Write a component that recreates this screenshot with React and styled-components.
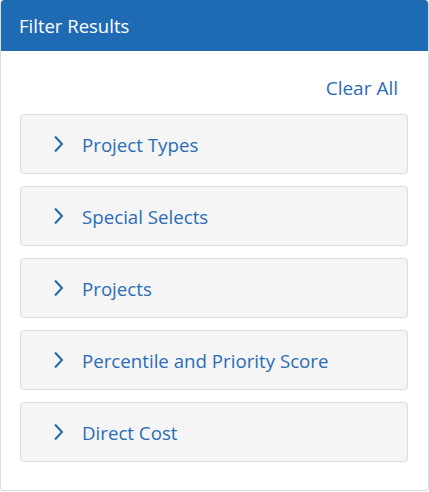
import React from 'react'
import styled, { createGlobalStyle } from 'styled-components'

const GlobalStyle = createGlobalStyle`
  body {
    margin: 0;
    background: #fff;
    font-family: 'Open Sans', 'Noto Sans', sans-serif;
  }
`

const sections = [
  'Project Types',
  'Special Selects',
  'Projects',
  'Percentile and Priority Score',
  'Direct Cost',
]

const App = () => {
  return (
    <>
      <GlobalStyle />
      <Panel>
        <Header>Filter Results</Header>
        <Body>
          <ClearRow>
            <ClearLink href='#'>Clear All</ClearLink>
          </ClearRow>
          <List>
            {sections.map((name) => (
              <Item key={name}>
                <Chevron viewBox='0 0 11 18' aria-hidden='true'>
                  <path d='M2 1.5 L9 9 L2 16.5' />
                </Chevron>
                <ItemLabel>{name}</ItemLabel>
              </Item>
            ))}
          </List>
        </Body>
      </Panel>
    </>
  )
}

const Panel = styled.section`
  width: 429px;
  height: 491px;
  box-sizing: border-box;
  border: 1px solid #dcdcdc;
  border-top: none;
  border-radius: 4px;
  overflow: hidden;
  background: #fff;
`
const Header = styled.div`
  height: 51px;
  background: #1f6bb3;
  color: #fff;
  font-size: 18.5px;
  display: flex;
  align-items: center;
  padding: 0 19px;
  margin: 0 -1px;
  border-radius: 4px 4px 0 0;
`
const Body = styled.div`
  padding: 23px 20px 0 19px;
`
const ClearRow = styled.div`
  display: flex;
  justify-content: flex-end;
  padding-right: 10px;
  height: 40px;
`
const ClearLink = styled.a`
  color: #2a6db6;
  font-size: 19px;
  text-decoration: none;
  line-height: 28px;
`
const List = styled.div`
  display: flex;
  flex-direction: column;
  gap: 12px;
`
const Item = styled.div`
  height: 60px;
  box-sizing: border-box;
  background: #f5f5f5;
  border: 1px solid #dddddd;
  border-radius: 4px;
  display: flex;
  align-items: center;
  padding-left: 32px;
  gap: 18px;
`
const Chevron = styled.svg`
  width: 11px;
  height: 18px;
  fill: none;
  stroke: #2367ae;
  stroke-width: 2;
`
const ItemLabel = styled.span`
  color: #2a6db6;
  font-size: 18.7px;
`

export default App
